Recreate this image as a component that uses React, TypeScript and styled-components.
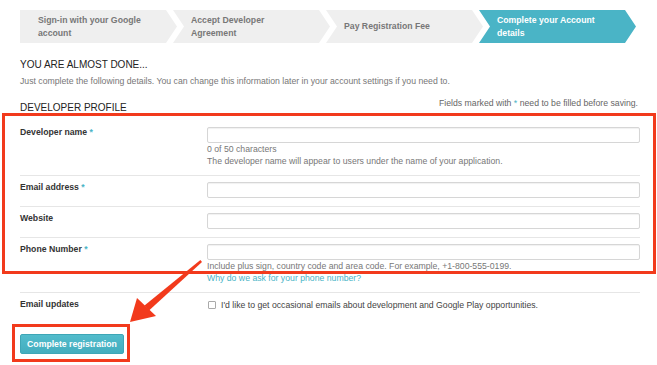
import styled, { createGlobalStyle } from "styled-components";

const GlobalStyle = createGlobalStyle`
  html, body {
    margin: 0;
    padding: 0;
    background: #ffffff;
  }
  body {
    font-family: "Liberation Sans", Arial, Helvetica, sans-serif;
    color: #333333;
    -webkit-font-smoothing: antialiased;
  }
`

const TEAL = '#4ab4c6'
const RED = '#f23a1c'

const steps = [
  { text: 'Sign-in with your Google account' },
  { text: 'Accept Developer Agreement' },
  { text: 'Pay Registration Fee' },
  { text: 'Complete your Account details', active: true },
]

function Breadcrumb() {
  return (
    <StyledSteps>
      {steps.map((step, i) => (
        <StyledStep key={i} $first={i === 0} $active={!!step.active}>
          <span>{step.text}</span>
        </StyledStep>
      ))}
    </StyledSteps>
  )
}

function Arrow() {
  return (
    <StyledArrow width="100" height="80" viewBox="0 0 100 80">
      <polygon points="81,13 79.4,11 23.5,56.5 28,61.5" fill={RED} />
      <polygon points="9,73 16,49 35,67" fill={RED} />
    </StyledArrow>
  )
}

function App() {
  return (
    <StyledPage>
      <GlobalStyle />
      <Breadcrumb />

      <StyledTitle>You are almost done...</StyledTitle>
      <StyledIntro>
        Just complete the following details. You can change this information later in your account settings if you need to.
      </StyledIntro>

      <StyledProfileHead>
        <StyledTitle>Developer profile</StyledTitle>
        <StyledNote>
          Fields marked with <Star>*</Star> need to be filled before saving.
        </StyledNote>
      </StyledProfileHead>

      <StyledRow>
        <StyledLabel>Developer name <Star>*</Star></StyledLabel>
        <StyledField>
          <StyledInput type="text" />
          <StyledHelp>0 of 50 characters</StyledHelp>
          <StyledHelp>The developer name will appear to users under the name of your application.</StyledHelp>
        </StyledField>
      </StyledRow>

      <StyledRow>
        <StyledLabel>Email address <Star>*</Star></StyledLabel>
        <StyledField>
          <StyledInput type="text" />
        </StyledField>
      </StyledRow>

      <StyledRow>
        <StyledLabel>Website</StyledLabel>
        <StyledField>
          <StyledInput type="text" />
        </StyledField>
      </StyledRow>

      <StyledRow>
        <StyledLabel>Phone Number <Star>*</Star></StyledLabel>
        <StyledField>
          <StyledInput type="text" />
          <StyledHelp>Include plus sign, country code and area code. For example, +1-800-555-0199.</StyledHelp>
          <StyledLink href="#">Why do we ask for your phone number?</StyledLink>
        </StyledField>
      </StyledRow>

      <StyledRow $last>
        <StyledLabel>Email updates</StyledLabel>
        <StyledCheckLine>
          <StyledCheckbox type="checkbox" />
          <span>I'd like to get occasional emails about development and Google Play opportunities.</span>
        </StyledCheckLine>
      </StyledRow>

      <StyledButton type="button">Complete registration</StyledButton>

      <StyledMark $left={2} $top={113} $width={654} $height={161} />
      <StyledMark $left={12} $top={324} $width={118} $height={38} />
      <Arrow />
    </StyledPage>
  )
}

const StyledPage = styled.div`
  position: relative;
  width: 620px;
  height: 355px;
  padding: 10px 17px 0 20px;
  box-sizing: content-box;
  display: flex;
  flex-direction: column;
  overflow: hidden;
  font-size: 8.7px;
`

const StyledSteps = styled.div`
  display: flex;
  height: 33px;
  flex: none;
`

const StyledStep = styled.div<{ $first: boolean; $active: boolean }>`
  width: 157px;
  flex: none;
  margin-left: ${(p) => (p.$first ? '0' : '-4px')};
  padding-left: 18px;
  padding-right: 30px;
  box-sizing: border-box;
  display: flex;
  align-items: center;
  background: ${(p) => (p.$active ? TEAL : '#efefef')};
  color: ${(p) => (p.$active ? '#ffffff' : '#777777')};
  font-size: 8.7px;
  font-weight: bold;
  line-height: 13px;
  clip-path: ${(p) =>
    p.$first
      ? 'polygon(0 0, calc(100% - 11px) 0, 100% 50%, calc(100% - 11px) 100%, 0 100%)'
      : 'polygon(0 0, calc(100% - 11px) 0, 100% 50%, calc(100% - 11px) 100%, 0 100%, 11px 50%)'};
`

const StyledTitle = styled.div`
  font-size: 10px;
  line-height: 12px;
  text-transform: uppercase;
  color: #222222;
  margin-top: 16px;
`

const StyledIntro = styled.div`
  font-size: 8.7px;
  line-height: 12px;
  color: #777777;
  margin-top: 4px;
`

const StyledProfileHead = styled.div`
  display: flex;
  justify-content: space-between;
  align-items: flex-start;
  margin-top: 10px;
  padding-bottom: 7px;

  ${StyledTitle} {
    margin-top: 5px;
  }
`

const StyledNote = styled.div`
  font-size: 8.7px;
  line-height: 12px;
  color: #666666;
  padding-right: 2px;
`

const Star = styled.span`
  color: ${TEAL};
`

const StyledRow = styled.div<{ $last?: boolean }>`
  display: grid;
  grid-template-columns: 187px 1fr;
  padding: 6px 0 8px;
  border-bottom: ${(p) => (p.$last ? 'none' : '1px solid #e6e6e6')};
`

const StyledLabel = styled.div`
  font-size: 8.7px;
  font-weight: bold;
  line-height: 12px;
  margin-top: -1px;
  color: #333333;
`

const StyledField = styled.div`
  display: flex;
  flex-direction: column;
`

const StyledInput = styled.input`
  height: 16px;
  width: 100%;
  margin: 0;
  padding: 0 4px;
  box-sizing: border-box;
  border: 1px solid #d6d6d6;
  border-radius: 2px;
  box-shadow: inset 0 1px 1px rgba(0, 0, 0, 0.06);
  background: #ffffff;
  font-family: inherit;
  font-size: 8.7px;
`

const StyledHelp = styled.div`
  font-size: 8.7px;
  line-height: 12px;
  color: #777777;
`

const StyledLink = styled.a`
  font-size: 8.7px;
  line-height: 12px;
  color: ${TEAL};
  text-decoration: none;
`

const StyledCheckLine = styled.label`
  display: flex;
  align-items: center;
  gap: 5px;
  font-size: 8.7px;
  line-height: 12px;
  color: #444444;
`

const StyledCheckbox = styled.input`
  width: 8px;
  height: 8px;
  flex: none;
  margin: 0 0 0 1px;
  appearance: none;
  border: 1px solid #aaaaaa;
  border-radius: 1px;
  background: #ffffff;
`

const StyledButton = styled.button`
  align-self: flex-start;
  margin-top: 15px;
  width: 104px;
  height: 20px;
  flex: none;
  padding: 0;
  border: 1px solid #3ea6b6;
  border-radius: 2px;
  background: linear-gradient(#52bccc, #43adbe);
  color: #ffffff;
  font-family: inherit;
  font-size: 8.7px;
  font-weight: bold;
`

const StyledMark = styled.div<{ $left: number; $top: number; $width: number; $height: number }>`
  position: absolute;
  left: ${(p) => p.$left}px;
  top: ${(p) => p.$top}px;
  width: ${(p) => p.$width}px;
  height: ${(p) => p.$height}px;
  box-sizing: border-box;
  border: 3px solid ${RED};
  pointer-events: none;
`

const StyledArrow = styled.svg`
  position: absolute;
  left: 121px;
  top: 249px;
  pointer-events: none;
`

export default App;
